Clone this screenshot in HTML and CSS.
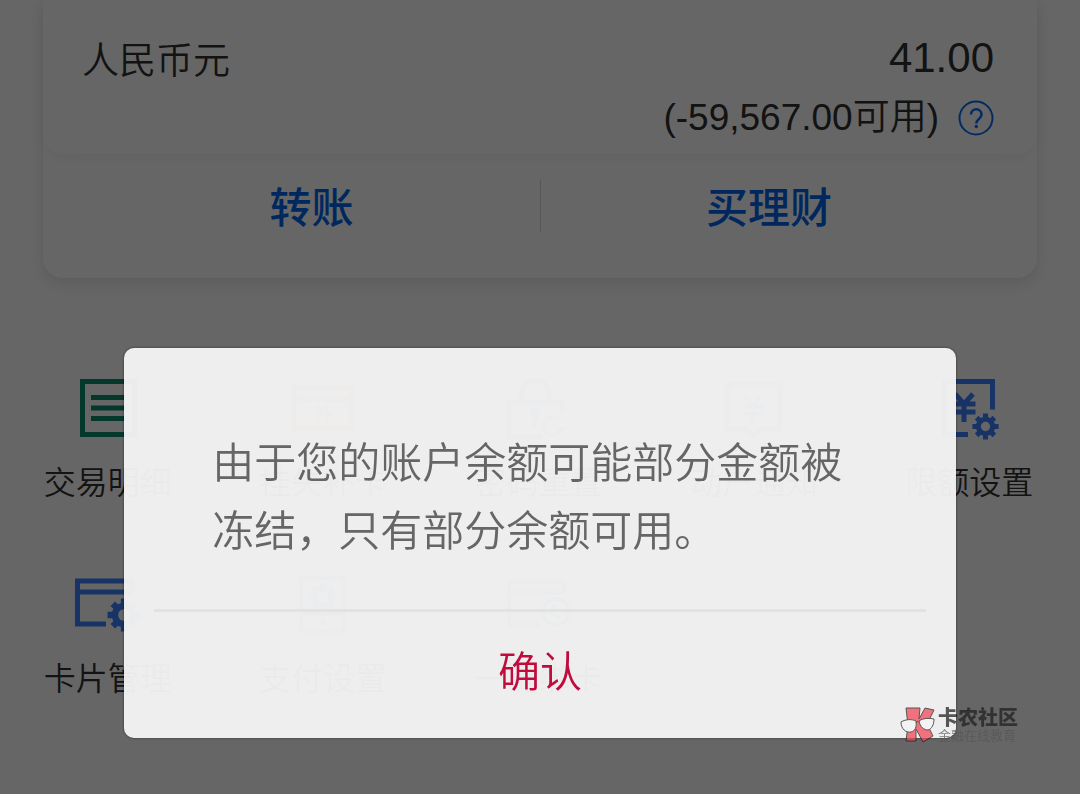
FILE: index.html
```
<!DOCTYPE html>
<html lang="zh-CN">
<head>
<meta charset="utf-8">
<meta name="viewport" content="width=device-width, initial-scale=1">
<title>账户</title>
<link rel="stylesheet" href="styles.css">
</head>
<body>
<svg class="defs" aria-hidden="true">
  <symbol id="gear" viewBox="-16 -16 32 32">
    <circle r="8.5" fill="none" stroke="currentColor" stroke-width="6"/>
    <path fill="none" stroke="currentColor" stroke-width="6" d="M0-9.500V-15.500M0 9.500V15.500M-9.500 0H-15.500M9.500 0H15.500M-7-7L-10.500-10.500M7 7L10.500 10.500M-7 7L-10.500 10.500M7-7L10.500-10.500"/>
  </symbol>
</svg>
<main class="page">
  <section class="account">
    <div class="balance">
      <span class="currency">人民币元</span>
      <div class="amounts">
        <span class="total">41.00</span>
        <div class="available">
          <span>(-59,567.00可用)</span>
          <button class="help" type="button" aria-label="帮助">
            <svg viewBox="0 0 36 36"><g fill="none" stroke="currentColor"><circle cx="18" cy="18" r="16.500" stroke-width="2"/><path stroke-width="2.500" d="M13 14.500c0-7 10.500-7 10.500 0 0 4.500-5.200 4.500-5.200 9"/></g><circle cx="18.300" cy="26.500" r="1.700" fill="currentColor"/></svg>
          </button>
        </div>
      </div>
    </div>
    <div class="actions">
      <button type="button">转账</button>
      <button type="button">买理财</button>
    </div>
  </section>

  <nav class="services">
    <button class="service green" type="button">
      <svg viewBox="0 0 64 64"><path fill="none" stroke="currentColor" stroke-width="5" d="M6.500 5.500h52v53h-52zM15 21.500h34M15 32h34M15 42.500h34"/></svg>
      <span>交易明细</span>
    </button>
    <button class="service red" type="button">
      <svg viewBox="0 0 64 64"><path fill="none" stroke="currentColor" stroke-width="5" d="M3 11.500h57v41H3zM3 23h57"/><path fill="none" stroke="currentColor" stroke-width="2.500" d="M26 29l2 3M23 34h8l-7 8M28 37v12M29 37l3 3M36 29v20M36 36l6 5"/></svg>
      <span>挂失补卡</span>
    </button>
    <button class="service" type="button">
      <svg viewBox="0 0 64 64"><path fill="none" stroke="currentColor" stroke-width="5" d="M15 24v-6a14 14 0 0 1 28 0v6M56 38V26H3v35h33M29 38v14"/><circle cx="29" cy="37" r="5" fill="currentColor"/><path fill="none" stroke="currentColor" stroke-width="4" d="M53 44a9 9 0 1 0 2 9"/><path fill="currentColor" d="M49 51h13l-6 7z"/></svg>
      <span>密码重置</span>
    </button>
    <button class="service" type="button">
      <svg viewBox="0 0 64 64"><path fill="none" stroke="currentColor" stroke-width="5" d="M5 9h53v44H38l-7 7-7-7H5z"/><path fill="none" stroke="currentColor" stroke-width="4" d="M23 20l8 10 8-10M21 31h20M21 38h20M31 29v18"/></svg>
      <span>动户通知</span>
    </button>
    <button class="service" type="button">
      <svg viewBox="0 0 64 64"><path fill="none" stroke="currentColor" stroke-width="5" d="M55.500 33.500V5.500H7v53h24M18 18l9 10 9-10M15.500 28h23M15.500 36h23M27 26v20"/><use href="#gear" x="35" y="37" width="27" height="27"/></svg>
      <span>限额设置</span>
    </button>
    <button class="service" type="button">
      <svg viewBox="0 0 64 64"><path fill="none" stroke="currentColor" stroke-width="5" d="M56 20V9H1.500v43H30M2 20h54"/><use href="#gear" x="31" y="26" width="34" height="34"/></svg>
      <span>卡片管理</span>
    </button>
    <button class="service" type="button">
      <svg viewBox="0 0 64 64"><path fill="none" stroke="currentColor" stroke-width="4" d="M10 6h43v53H10zM10 42h43"/><use href="#gear" x="17" y="10" width="30" height="30"/><circle cx="32" cy="50" r="3" fill="currentColor"/></svg>
      <span>支付设置</span>
    </button>
    <button class="service" type="button">
      <svg viewBox="0 0 64 64"><path fill="none" stroke="currentColor" stroke-width="4" d="M58 21V10H3v43h30M3 21h55"/><circle cx="50" cy="40" r="13" fill="none" stroke="currentColor" stroke-width="4"/><path fill="none" stroke="currentColor" stroke-width="4" d="M50 33l-6 6 10 8"/></svg>
      <span>一键绑卡</span>
    </button>
  </nav>
</main>

<div class="overlay">
  <div class="dialog" role="alertdialog" aria-modal="true" aria-describedby="message">
    <p class="message" id="message">由于您的账户余额可能部分金额被冻结，只有部分余额可用。</p>
    <button class="confirm" type="button">确认</button>
  </div>
</div>

<div class="watermark">
  <svg class="mark" viewBox="0 0 36 36" aria-hidden="true">
    <path fill="#f04858" stroke="#222" stroke-width="1" d="M6 1h14l-1 11 6-11 9 2-7 14 6 12-10 6-7-13v12H6l2-16z"/>
    <path fill="#f4f4f4" stroke="#222" stroke-width="1" d="M1 15c5-3 11-3 15-1 1 6-1 10-5 11-5 1-10-3-10-10zM19 14c4-3 10-3 15-2 0 5-2 10-6 11-4 0-8-3-9-9z"/>
    <path fill="none" stroke="#222" stroke-width="1" d="M16 16c1-2 2-2 3-1"/>
  </svg>
  <div class="brand"><strong>卡农社区</strong><small>金融在线教育</small></div>
</div>
</body>
</html>
```
FILE: styles.css
```
* { box-sizing: border-box; }

body {
  margin: 0;
  background: #fff;
  color: #303030;
  font-family: "Liberation Sans", "Noto Sans CJK SC", sans-serif;
  font-weight: 350;
}

button {
  border: 0;
  padding: 0;
  background: none;
  color: inherit;
  font: inherit;
  cursor: pointer;
}

.defs { position: absolute; width: 0; height: 0; }

.page { min-height: 100vh; overflow: hidden; }

.account {
  margin: 0 43px;
  border-radius: 0 0 20px 20px;
  box-shadow: 0 6px 16px rgba(0, 0, 0, .1);
}

.balance {
  display: flex;
  justify-content: space-between;
  padding: 28px 43px 6px 39px;
  border-radius: 0 0 20px 20px;
  box-shadow: 0 4px 12px rgba(0, 0, 0, .04);
}

.currency { font-size: 37px; line-height: 68px; }

.amounts {
  display: flex;
  flex-direction: column;
  align-items: flex-end;
}

.total { font-size: 42px; line-height: 60px; }

.available {
  display: flex;
  align-items: center;
  gap: 19px;
  font-size: 37px;
  line-height: 60px;
}

.help { display: flex; color: #0c6cf0; }
.help svg { width: 36px; height: 36px; }

.actions {
  display: grid;
  grid-template-columns: 1fr 1fr;
  padding: 26px 0 46px;
  color: #0064ee;
  font-size: 42px;
  font-weight: 500;
  line-height: 46px;
}

.actions button { padding: 6px 0 0 40px; }
.actions button + button { padding: 6px 40px 0 0; border-left: 1px solid #d8d8d8; }

.services {
  display: grid;
  grid-template-columns: repeat(5, 1fr);
  row-gap: 66px;
  padding: 98px 3px 0 0;
}

.service {
  display: flex;
  flex-direction: column;
  align-items: center;
  gap: 18px;
  color: #3c80ff;
}

.service svg { width: 64px; height: 64px; overflow: visible; }
.service span { color: #303030; font-size: 32px; line-height: 50px; height: 48px; }
.green { color: #0a8c6c; }
.red { color: #e84860; }

.overlay {
  position: fixed;
  inset: 0;
  display: flex;
  justify-content: center;
  align-items: flex-start;
  padding-top: 348px;
  background: rgba(0, 0, 0, .6);
}

.dialog {
  width: 77%;
  padding: 0 30px 4px;
  border-radius: 10px;
  background: rgba(244, 244, 244, .96);
  box-shadow: 0 0 3px rgba(0, 0, 0, .5);
}

.message {
  margin: 0;
  padding: 82px 58px 43px;
  border-bottom: 3px solid #e2e2e2;
  color: #666;
  font-size: 42px;
  line-height: 68px;
}

.confirm {
  display: block;
  width: 100%;
  color: #c00c3c;
  font-size: 42px;
  line-height: 122px;
}

.watermark {
  position: fixed;
  right: 62px;
  bottom: 51px;
  display: flex;
  gap: 2px;
  opacity: .75;
}

.mark { width: 36px; height: 36px; }
.brand { display: flex; flex-direction: column; color: #222; }
.brand strong { font-size: 20px; font-weight: 900; line-height: 22px; }
.brand small { font-size: 13px; line-height: 14px; color: #555; }
```
